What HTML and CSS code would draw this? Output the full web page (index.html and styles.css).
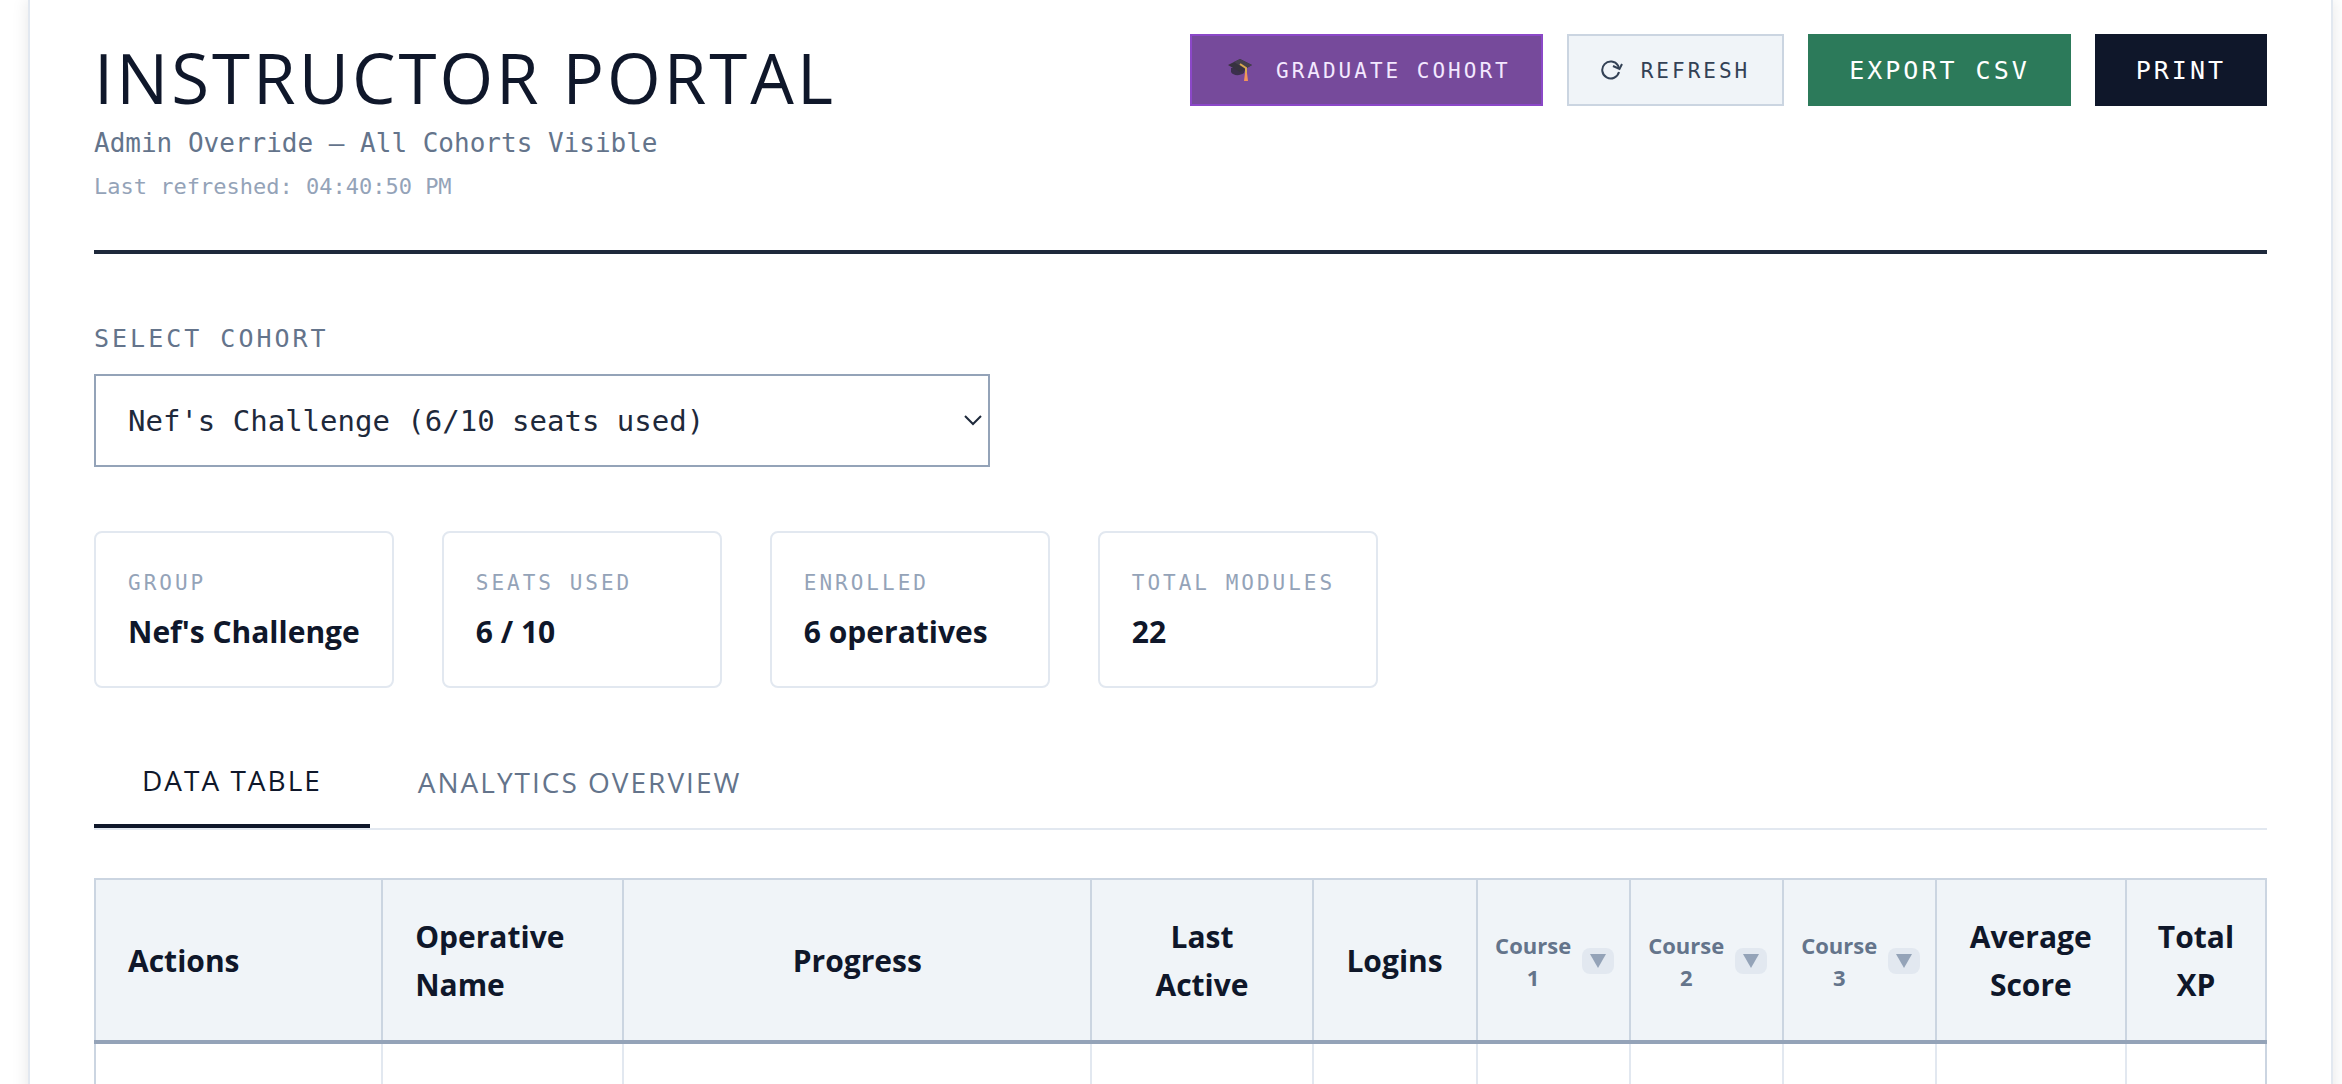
FILE: index.html
```
<!DOCTYPE html>
<html lang="en">
<head>
<meta charset="utf-8">
<title>Instructor Portal</title>
<link rel="stylesheet" href="styles.css">
</head>
<body>
<main class="portal">
  <header class="portal-header">
    <div class="heading">
      <h1>INSTRUCTOR PORTAL</h1>
      <p class="subtitle">Admin Override — All Cohorts Visible</p>
      <p class="refreshed">Last refreshed: 04:40:50 PM</p>
    </div>
    <div class="actions">
      <button type="button" class="btn btn-small btn-graduate">
        <svg class="icon-cap" viewBox="0 0 24 24" aria-hidden="true">
          <path d="M3 9v4c2 4 9 4 13 1l2-6z" fill="#3b2f4d"/>
          <path d="M12 0 24 6 12 13 0 6z" fill="#37323f"/>
          <path d="M12 0 24 6 17 10 6 3z" fill="#453f4e"/>
          <path d="M12 5l6 4v6" fill="none" stroke="#d9a94f" stroke-width="2"/>
          <path d="M17 14h2l1 8h-4z" fill="#f4945a"/>
        </svg>
        GRADUATE COHORT
      </button>
      <button type="button" class="btn btn-small btn-refresh">
        <svg class="icon-refresh" viewBox="0 0 22 22" aria-hidden="true">
          <path d="M18 12a8.500 8.500 0 1 1-1-6.500l1 3" fill="none" stroke="#334155" stroke-width="2"/>
          <path d="M12 6l6.500 3L21 4" fill="none" stroke="#334155" stroke-width="2"/>
        </svg>
        REFRESH
      </button>
      <button type="button" class="btn btn-export">EXPORT CSV</button>
      <button type="button" class="btn btn-print">PRINT</button>
    </div>
  </header>

  <section class="cohort">
    <label for="cohort">SELECT COHORT</label>
    <div class="select-wrap">
      <select id="cohort">
        <option>Nef's Challenge (6/10 seats used)</option>
      </select>
      <svg class="chevron" viewBox="0 0 18 12" aria-hidden="true"><path d="M1 2l8 8 8-8" fill="none" stroke="#1e293b" stroke-width="2"/></svg>
    </div>
  </section>

  <section class="stats">
    <div class="stat"><div class="stat-label">GROUP</div><div class="stat-value">Nef's Challenge</div></div>
    <div class="stat"><div class="stat-label">SEATS USED</div><div class="stat-value">6 / 10</div></div>
    <div class="stat"><div class="stat-label">ENROLLED</div><div class="stat-value">6 operatives</div></div>
    <div class="stat"><div class="stat-label">TOTAL MODULES</div><div class="stat-value">22</div></div>
  </section>

  <nav class="tabs">
    <button type="button" class="tab active">DATA TABLE</button>
    <button type="button" class="tab">ANALYTICS OVERVIEW</button>
  </nav>

  <table class="roster">
    <colgroup>
      <col class="col-actions"><col class="col-name"><col class="col-progress"><col class="col-active"><col class="col-logins">
      <col class="col-course"><col class="col-course"><col class="col-course"><col class="col-score"><col class="col-xp">
    </colgroup>
    <thead>
      <tr>
        <th class="left">Actions</th>
        <th class="left">Operative Name</th>
        <th>Progress</th>
        <th>Last Active</th>
        <th>Logins</th>
        <th class="course"><div class="course-head"><span>Course 1</span><button type="button" class="expand" aria-label="Expand course 1"><svg viewBox="0 0 16 14"><path d="M0 0h16L8 14z"/></svg></button></div></th>
        <th class="course"><div class="course-head"><span>Course 2</span><button type="button" class="expand" aria-label="Expand course 2"><svg viewBox="0 0 16 14"><path d="M0 0h16L8 14z"/></svg></button></div></th>
        <th class="course"><div class="course-head"><span>Course 3</span><button type="button" class="expand" aria-label="Expand course 3"><svg viewBox="0 0 16 14"><path d="M0 0h16L8 14z"/></svg></button></div></th>
        <th>Average Score</th>
        <th>Total XP</th>
      </tr>
    </thead>
    <tbody>
      <tr><td></td><td></td><td></td><td></td><td></td><td></td><td></td><td></td><td></td><td></td></tr>
    </tbody>
  </table>
</main>
</body>
</html>
```

FILE: styles.css
```
* {
	box-sizing: border-box;
}
body {
	margin: 0;
	height: 100vh;
	overflow: hidden;
	background: #fff;
	color: #0f172a;
	font-family: "Open Sans", "Noto Sans", sans-serif;
	font-size: 30px;
	line-height: 48px;
}
h1, p {
	margin: 0;
}
button {
	margin: 0;
	border: 0;
	cursor: pointer;
}
.portal {
	margin: 0 9px 0 28px;
	min-height: 100vh;
	padding: 34px 64px 0;
	background: #fff;
	border: solid #e2e8f0;
	border-width: 0 2px;
	box-shadow: 0 0 16px rgba(0, 0, 0, 0.1);
}

/* header */
.portal-header {
	display: flex;
	justify-content: space-between;
	align-items: flex-start;
	padding-bottom: 42px;
	border-bottom: 4px solid #1e293b;
}
h1 {
	font-size: 69px;
	line-height: 86px;
	font-weight: 400;
	letter-spacing: 3px;
}
.subtitle, .refreshed, .btn, label, select, .stat-label {
	font-family: "DejaVu Sans Mono", monospace;
}
.subtitle {
	font-size: 26px;
	line-height: 46px;
	color: #64748b;
}
.refreshed {
	font-size: 22px;
	line-height: 42px;
	color: #94a3b8;
}
.actions {
	display: flex;
	gap: 24px;
}
.btn {
	display: flex;
	align-items: center;
	height: 72px;
	padding: 0 41px;
	font-size: 25px;
	letter-spacing: 3px;
	color: #fff;
}
.btn-small {
	padding: 2px 32px 0;
	font-size: 21px;
}
.btn-graduate {
	gap: 24px;
	padding: 2px 30px 0 36px;
	background: #764a9b;
	border: 2px solid #8b48c8;
	color: #f3e8ff;
}
.btn-refresh {
	gap: 18px;
	background: #f0f4f8;
	border: 2px solid #cbd5e1;
	color: #334155;
}
.btn-export {
	background: #2c7a5a;
}
.btn-print {
	background: #0f172a;
}
.icon-cap {
	width: 24px;
	height: 24px;
}
.icon-refresh {
	width: 22px;
	height: 22px;
}

/* cohort picker */
.cohort {
	margin-top: 64px;
}
label {
	display: block;
	margin-bottom: 14px;
	font-size: 25px;
	line-height: 42px;
	letter-spacing: 3px;
	color: #64748b;
}
.select-wrap {
	position: relative;
	max-width: 896px;
}
select {
	display: block;
	width: 100%;
	height: 93px;
	padding: 22px 32px;
	font-size: 29px;
	appearance: none;
	border: 2px solid #94a3b8;
	border-radius: 0;
	background: #fff;
	color: #1e293b;
}
.chevron {
	position: absolute;
	right: 8px;
	top: 40px;
	width: 18px;
	height: 12px;
	pointer-events: none;
}

/* stat cards */
.stats {
	display: flex;
	gap: 48px;
	margin-top: 64px;
}
.stat {
	min-width: 280px;
	padding: 32px 32px 30px;
	border: 2px solid #e2e8f0;
	border-radius: 8px;
}
.stat-label {
	margin-bottom: 6px;
	font-size: 21px;
	line-height: 37px;
	letter-spacing: 3px;
	color: #94a3b8;
}
.stat-value {
	font-weight: 700;
}

/* tabs */
.tabs {
	display: flex;
	margin-top: 48px;
	border-bottom: 2px solid #e2e8f0;
}
.tab {
	padding: 24px 48px;
	background: none;
	font-family: inherit;
	font-size: 28px;
	line-height: 40px;
	letter-spacing: 2px;
	color: #64748b;
}
.tab.active {
	border-bottom: 4px solid #0f172a;
	color: #0f172a;
}

/* table */
.roster {
	width: 100%;
	margin-top: 48px;
	table-layout: fixed;
	border-collapse: collapse;
	border: 2px solid #cbd5e1;
}
.col-actions { width: 287px; }
.col-name { width: 241px; }
.col-progress { width: 468px; }
.col-active { width: 221px; }
.col-logins { width: 164px; }
.col-course { width: 153px; }
.col-score { width: 190px; }
.col-xp { width: 140px; }
th {
	padding: 33px 30px 31px;
	background: #f0f4f8;
	border: 2px solid #cbd5e1;
	border-bottom: 4px solid #94a3b8;
	font-weight: 700;
	text-align: center;
}
th.left {
	padding-left: 32px;
	text-align: left;
}
th.course {
	padding: 17px 15px 15px;
	font-size: 22px;
	line-height: 32px;
	color: #64748b;
}
.course-head {
	display: flex;
	align-items: center;
	justify-content: center;
	gap: 8px;
}
.expand {
	display: flex;
	padding: 6px 8px;
	border-radius: 8px;
	background: #e2e8f0;
}
.expand svg {
	width: 16px;
	height: 14px;
	fill: #94a3b8;
}
td {
	height: 120px;
	border: 2px solid #e2e8f0;
}
td:first-child {
	border-left-color: #cbd5e1;
}
td:last-child {
	border-right-color: #cbd5e1;
}
```
